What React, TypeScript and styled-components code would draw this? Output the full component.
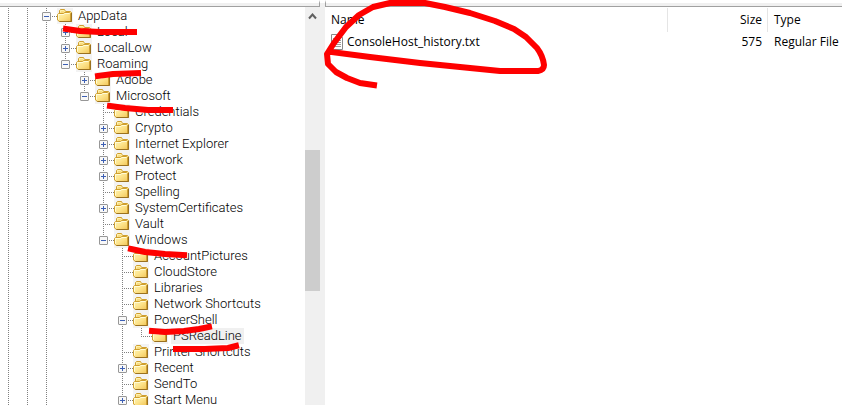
import React, { useState } from 'react';
import styled, { createGlobalStyle, css } from 'styled-components';

const GlobalStyle = createGlobalStyle`
  * { box-sizing: border-box; }
  body { margin: 0; background: #fff; color: #000; overflow: hidden; }
`;

const dotsDown = 'repeating-linear-gradient(to bottom, #808080 0 1px, transparent 1px 2px)';
const dotsAcross = 'repeating-linear-gradient(to right, #808080 0 1px, transparent 1px 2px)';

const Shell = styled.div`
  position: relative;
  display: grid;
  grid-template-columns: 320px 5px minmax(0, 1fr);
  height: 100vh;
  overflow: hidden;
`;

const Pane = styled.section`
  display: flex;
  flex-direction: column;
  min-width: 0;
  min-height: 0;
`;

const PaneEdge = styled.div<{ $side: 'left' | 'right' }>`
  flex: none;
  height: 7px;
  border-top: 3px solid #fff;
  border-bottom: 1px solid #a0a0a0;
  ${(p) => (p.$side === 'left' ? css`border-right: 1px solid #a0a0a0;` : css`border-left: 1px solid #a0a0a0;`)}
  background: #f0f0f0;
`;

const Splitter = styled.div`
  border-top: 3px solid #fff;
  background: #f0f0f0;
`;

const TreeArea = styled.div`
  display: flex;
  flex: 1;
  min-height: 0;
`;

const Tree = styled.ul`
  flex: 1;
  min-width: 0;
  margin: 0;
  padding: 1px 0 0;
  list-style: none;
  overflow: hidden;
  font: 300 13px/16px Roboto, sans-serif;
`;

const TreeRow = styled.li`
  display: flex;
  height: 16px;
  white-space: nowrap;
`;

type Line = 'none' | 'full' | 'tee' | 'end';

const Guide = styled.span<{ $line: Line }>`
  display: flex;
  align-items: flex-start;
  flex: none;
  width: 19px;
  height: 16px;
  padding: 4px 0 0 4px;
  background-repeat: no-repeat;
  background-image: ${(p) =>
    p.$line === 'none' ? 'none' : p.$line === 'full' ? dotsDown : `${dotsDown}, ${dotsAcross}`};
  background-size: 1px ${(p) => (p.$line === 'end' ? '8px' : '16px')}, 11px 1px;
  background-position: 8px 0, 8px 8px;
`;

const Expander = styled.button`
  display: block;
  width: 9px;
  height: 9px;
  padding: 0;
  border: 0;
  background: #fff;
  svg { display: block; }
`;

const FolderCell = styled.span`
  flex: none;
  width: 16px;
  height: 16px;
  background: #f3f3f3;
  svg { display: block; }
`;

const Label = styled.span<{ $selected?: boolean }>`
  margin-left: 3px;
  padding: 0 2px;
  background: ${(p) => (p.$selected ? '#f0f0f0' : 'transparent')};
`;

const ScrollBar = styled.div`
  display: flex;
  flex-direction: column;
  width: 15px;
  background: #f0f0f0;
`;

const ScrollButton = styled.button`
  display: flex;
  justify-content: center;
  height: 17px;
  padding: 6px 0 0;
  border: 0;
  background: transparent;
`;

const ScrollThumb = styled.div`
  height: 141px;
  margin-top: 126px;
  background: #cdcdcd;
`;

const FileTable = styled.table`
  width: 100%;
  border-collapse: separate;
  border-spacing: 0;
  table-layout: fixed;
  margin-top: 1px;
  font: 12px/16px "Open Sans", sans-serif;
`;

const HeadCell = styled.th<{ $width?: number; $align?: string }>`
  width: ${(p) => (p.$width ? `${p.$width}px` : 'auto')};
  height: 24px;
  padding: 0 5px 0 6px;
  border-right: 1px solid #e5e5e5;
  font-weight: 400;
  text-align: ${(p) => p.$align ?? 'left'};
  &:last-child { border-right: 0; }
`;

const Cell = styled.td<{ $align?: string }>`
  height: 20px;
  padding: 0 6px;
  white-space: nowrap;
  text-align: ${(p) => p.$align ?? 'left'};
`;

const FileName = styled.span`
  display: flex;
  align-items: center;
  gap: 4px;
  svg { flex: none; }
`;

const Markup = styled.svg`
  position: absolute;
  top: 0;
  left: 0;
  pointer-events: none;
`;

function FolderIcon() {
  return (
    <svg width="16" height="16" viewBox="0 0 16 16" aria-hidden="true">
      <defs>
        <linearGradient id="folderFront" x1="0" y1="0" x2="1" y2="1">
          <stop offset="0" stopColor="#fff6b8" />
          <stop offset="0.5" stopColor="#fde48c" />
          <stop offset="1" stopColor="#f2c659" />
        </linearGradient>
      </defs>
      <path d="M2.5 13.5V2.5L3.5 1.5H7.5L8.5 3.5H13.5L14.5 4.5V13.5Z" fill="#f8dc80" stroke="#cf9f2f" />
      <path d="M3.5 4.5V2.5H7L8.5 4.5H13" fill="none" stroke="#fff2ae" />
      <path d="M2.5 13.5L0.5 12V6.5L1.5 5.5H6.5L7.5 4.5H12.5L13.5 5.5V13.5Z" fill="url(#folderFront)" stroke="#cf9f2f" />
      <path d="M1.5 11.5V6.5H7L8 5.5H12.5" fill="none" stroke="#fffcd8" />
      <path d="M2.5 13.5H14.5V5" fill="none" stroke="#9a7120" />
    </svg>
  );
}

function ToggleIcon({ open }: { open: boolean }) {
  return (
    <svg width="9" height="9" viewBox="0 0 9 9" aria-hidden="true">
      <rect x="0.5" y="0.5" width="8" height="8" rx="0.5" fill="#f8f8f8" stroke="#979797" />
      <path d={open ? 'M2 4.5H7' : 'M2 4.5H7M4.5 2V7'} stroke="#3c5fb4" />
    </svg>
  );
}

function TextFileIcon() {
  return (
    <svg width="12" height="16" viewBox="0 0 12 16" aria-hidden="true">
      <path d="M0.5 0.5H8.5L11.5 3.5V15.5H0.5Z" fill="#fff" stroke="#8a8a8a" />
      <path d="M8.5 0.5V3.5H11.5M2 4.5H7M2 6.5H10M2 8.5H10M2 10.5H10M2 12.5H10" fill="none" stroke="#9b9b9b" />
    </svg>
  );
}

interface Folder {
  name: string;
  lines: Line[];
  open?: boolean;
  leaf?: boolean;
}

const outer: Line[] = ['full', 'full'];
const top: Line[] = [...outer, 'full'];
const inMicrosoft: Line[] = [...top, 'none', 'none'];
const inWindows: Line[] = [...inMicrosoft, 'none'];

const folders: Folder[] = [
  { name: 'AppData', lines: [...outer, 'tee'], open: true },
  { name: 'Local', lines: [...top, 'tee'] },
  { name: 'LocalLow', lines: [...top, 'tee'] },
  { name: 'Roaming', lines: [...top, 'end'], open: true },
  { name: 'Adobe', lines: [...top, 'none', 'tee'] },
  { name: 'Microsoft', lines: [...top, 'none', 'end'], open: true },
  { name: 'Credentials', lines: [...inMicrosoft, 'tee'], leaf: true },
  { name: 'Crypto', lines: [...inMicrosoft, 'tee'] },
  { name: 'Internet Explorer', lines: [...inMicrosoft, 'tee'] },
  { name: 'Network', lines: [...inMicrosoft, 'tee'] },
  { name: 'Protect', lines: [...inMicrosoft, 'tee'] },
  { name: 'Spelling', lines: [...inMicrosoft, 'tee'], leaf: true },
  { name: 'SystemCertificates', lines: [...inMicrosoft, 'tee'] },
  { name: 'Vault', lines: [...inMicrosoft, 'tee'], leaf: true },
  { name: 'Windows', lines: [...inMicrosoft, 'end'], open: true },
  { name: 'AccountPictures', lines: [...inWindows, 'tee'], leaf: true },
  { name: 'CloudStore', lines: [...inWindows, 'tee'], leaf: true },
  { name: 'Libraries', lines: [...inWindows, 'tee'], leaf: true },
  { name: 'Network Shortcuts', lines: [...inWindows, 'tee'], leaf: true },
  { name: 'PowerShell', lines: [...inWindows, 'tee'], open: true },
  { name: 'PSReadLine', lines: [...inWindows, 'full', 'end'], leaf: true },
  { name: 'Printer Shortcuts', lines: [...inWindows, 'tee'], leaf: true },
  { name: 'Recent', lines: [...inWindows, 'tee'] },
  { name: 'SendTo', lines: [...inWindows, 'tee'], leaf: true },
  { name: 'Start Menu', lines: [...inWindows, 'tee'] },
];

const files = [{ name: 'ConsoleHost_history.txt', size: 575, type: 'Regular File' }];

const strokes = [
  'M66 29L80 31L100 32L134 32',
  'M98 76L113 74L138 73',
  'M110 106L125 108L148 110L170 110',
  'M131 249L145 252L165 254L184 255',
  'M152 331L165 332L184 331L199 329L209 327',
  'M176 349L205 349L228 348L236 346',
  'M331 52L370 57L420 63L460 67L500 71L538 71Q544 70 544 65Q543 56 537 48L526 37L514 29L495 21L470 13L445 7L425 3L390 3L373 7L359 15L346 27L334 43L327 54L328 64L336 72L347 78L360 83L374 85',
];

export default function App() {
  const [selected, setSelected] = useState('PSReadLine');
  return (
    <>
      <GlobalStyle />
      <Shell>
        <Pane aria-label="Folders">
          <PaneEdge $side="left" />
          <TreeArea>
            <Tree role="tree">
              {folders.map((f) => (
                <TreeRow
                  key={f.name}
                  role="treeitem"
                  aria-level={f.lines.length}
                  aria-selected={f.name === selected}
                  onClick={() => setSelected(f.name)}
                >
                  {f.lines.map((line, i) => (
                    <Guide key={i} $line={line}>
                      {i === f.lines.length - 1 && !f.leaf && (
                        <Expander type="button" aria-label={`Toggle ${f.name}`}>
                          <ToggleIcon open={!!f.open} />
                        </Expander>
                      )}
                    </Guide>
                  ))}
                  <FolderCell>
                    <FolderIcon />
                  </FolderCell>
                  <Label $selected={f.name === selected}>{f.name}</Label>
                </TreeRow>
              ))}
            </Tree>
            <ScrollBar>
              <ScrollButton type="button" aria-label="Scroll up">
                <svg width="9" height="7" viewBox="0 0 9 7" aria-hidden="true">
                  <path d="M1 5.5L4.5 1.5L8 5.5" fill="none" stroke="#606060" strokeWidth="2" />
                </svg>
              </ScrollButton>
              <ScrollThumb />
            </ScrollBar>
          </TreeArea>
        </Pane>
        <Splitter />
        <Pane aria-label="Files">
          <PaneEdge $side="right" />
          <FileTable>
            <thead>
              <tr>
                <HeadCell>Name</HeadCell>
                <HeadCell $width={100} $align="right">Size</HeadCell>
                <HeadCell $width={74}>Type</HeadCell>
              </tr>
            </thead>
            <tbody>
              {files.map((f) => (
                <tr key={f.name}>
                  <Cell>
                    <FileName>
                      <TextFileIcon />
                      {f.name}
                    </FileName>
                  </Cell>
                  <Cell $align="right">{f.size}</Cell>
                  <Cell>{f.type}</Cell>
                </tr>
              ))}
            </tbody>
          </FileTable>
        </Pane>
        <Markup width="560" height="360" viewBox="0 0 560 360" fill="none" stroke="#fe0000" strokeWidth="6" strokeLinejoin="round" strokeLinecap="square" aria-hidden="true">
          {strokes.map((d) => (
            <path key={d} d={d} />
          ))}
        </Markup>
      </Shell>
    </>
  );
}
